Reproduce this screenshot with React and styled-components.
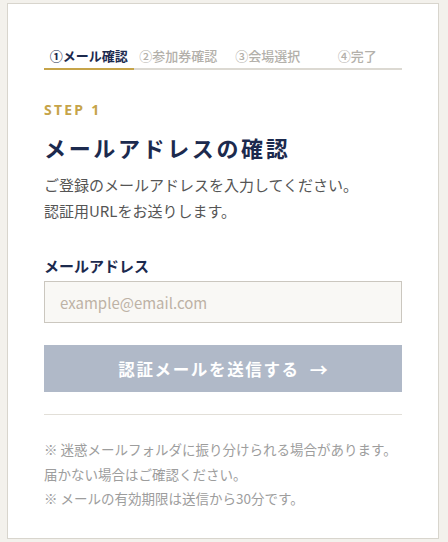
import React from "react";
import styled, { createGlobalStyle } from "styled-components";

const GlobalStyle = createGlobalStyle`
  html, body {
    margin: 0;
    padding: 0;
    background: #f3f1ec;
  }
  body {
    font-family: "Noto Sans CJK JP", "Noto Sans", sans-serif;
    color: #555;
  }
  * { box-sizing: border-box; }
`;

const Page = styled.div`
  padding: 3px 0 0 7px;
`;

const Card = styled.div`
  width: 432px;
  background: #fff;
  border: 1px solid #d8d5cd;
  padding: 42px 36px 27px;
`;

const Steps = styled.ol`
  list-style: none;
  margin: 0;
  padding: 0;
  display: grid;
  grid-template-columns: repeat(4, 1fr);
`;

const StepTab = styled.li`
  text-align: center;
  font-size: 13px;
  line-height: 19px;
  font-weight: ${(p) => (p.$active ? 700 : 500)};
  padding-bottom: 3px;
  white-space: nowrap;
  color: ${(p) => (p.$active ? "#1c2a4e" : "#b3b0aa")};
  border-bottom: 2px solid ${(p) => (p.$active ? "#c6a449" : "#dcd9d2")};
`;

const Eyebrow = styled.div`
  margin-top: 31px;
  font-family: "Noto Sans", "Noto Sans CJK JP", sans-serif;
  font-size: 14px;
  line-height: 18px;
  font-weight: 700;
  letter-spacing: 0.16em;
  color: #c6a449;
`;

const Title = styled.h1`
  margin: 12px 0 0;
  font-family: "Noto Sans CJK JP", serif;
  font-size: 22px;
  line-height: 33px;
  font-weight: 700;
  letter-spacing: 0.12em;
  color: #1c2a4e;
`;

const Lead = styled.p`
  margin: 8px 0 0;
  font-size: 15px;
  line-height: 26px;
  color: #555;
`;

const FieldLabel = styled.label`
  display: block;
  margin-top: 31px;
  font-size: 15px;
  line-height: 22px;
  font-weight: 700;
  color: #1c2a4e;
`;

const EmailInput = styled.input`
  display: block;
  width: 100%;
  height: 42px;
  margin-top: 4px;
  padding: 0 15px;
  border: 1px solid #cbc7bf;
  border-radius: 0;
  background: #f9f8f5;
  font-family: "Noto Sans CJK JP", "Noto Sans", sans-serif;
  font-size: 15px;
  color: #333;
  outline: none;
  &::placeholder {
    color: #bdb2a5;
  }
`;

const SubmitButton = styled.button`
  display: flex;
  align-items: center;
  justify-content: center;
  gap: 10px;
  width: 100%;
  height: 47px;
  margin-top: 22px;
  border: none;
  border-radius: 0;
  background: #b0b9c8;
  color: #fff;
  font-family: "Noto Sans CJK JP", sans-serif;
  font-size: 16.5px;
  font-weight: 700;
  letter-spacing: 0.1em;
  cursor: not-allowed;
`;

const Arrow = styled.span`
  font-size: 18px;
  letter-spacing: 0;
`;

const Divider = styled.hr`
  margin: 22px 0 0;
  border: none;
  border-top: 1px solid #e2dfd8;
`;

const Notes = styled.div`
  margin-top: 22px;
  font-size: 13.5px;
  line-height: 24.5px;
  color: #9d9d9d;
`;

const steps = ["①メール確認", "②参加券確認", "③会場選択", "④完了"];

export default function App() {
  return (
    <Page>
      <GlobalStyle />
      <Card>
        <Steps>
          {steps.map((s, i) => (
            <StepTab key={s} $active={i === 0}>
              {s}
            </StepTab>
          ))}
        </Steps>
        <Eyebrow>STEP 1</Eyebrow>
        <Title>メールアドレスの確認</Title>
        <Lead>
          ご登録のメールアドレスを入力してください。
          <br />
          認証用URLをお送りします。
        </Lead>
        <FieldLabel htmlFor="email">メールアドレス</FieldLabel>
        <EmailInput id="email" type="email" placeholder="example@email.com" />
        <SubmitButton type="button" disabled>
          <span>認証メールを送信する</span>
          <Arrow>→</Arrow>
        </SubmitButton>
        <Divider />
        <Notes>
          ※ 迷惑メールフォルダに振り分けられる場合があります。
          <br />
          届かない場合はご確認ください。
          <br />
          ※ メールの有効期限は送信から30分です。
        </Notes>
      </Card>
    </Page>
  );
}
